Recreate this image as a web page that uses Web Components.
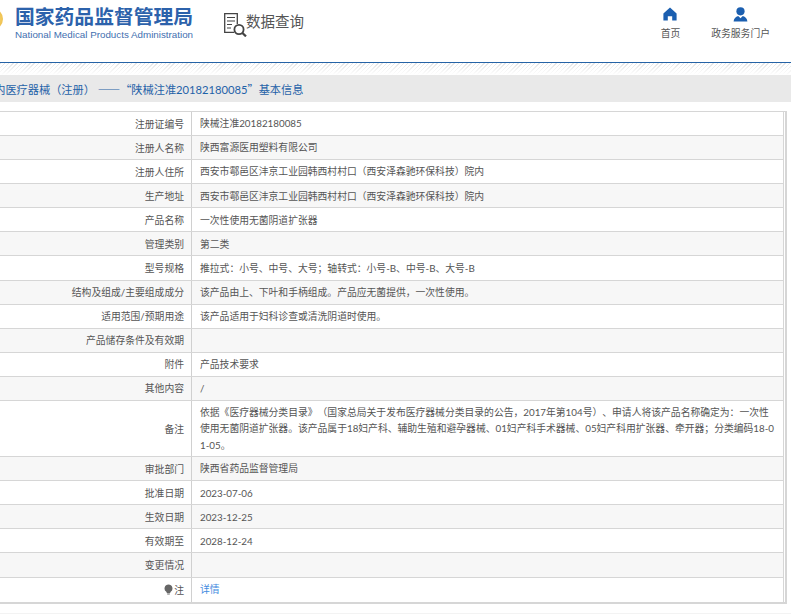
<!DOCTYPE html>
<html lang="zh-CN">
<head>
<meta charset="UTF-8">
<title>数据查询</title>
<style>
  html, body {
    margin: 0;
    height: 614px;
    overflow: hidden;
    background: #fff;
    font-family: Lato, "Noto Sans CJK SC", sans-serif;
    font-size: 9.8px;
    color: #555;
    text-spacing-trim: space-all;
  }
  .cjk { font-family: "Noto Sans CJK SC", sans-serif; }
</style>
</head>
<body>
<site-header>
  <nav-item slot="nav" label="首页" icon="home"></nav-item>
  <nav-item slot="nav" label="政务服务门户" icon="user"></nav-item>
</site-header>
<title-bar>境内医疗器械（注册） <span class="cjk">——“</span>陕械注准20182180085<span class="cjk">”</span>基本信息</title-bar>
<info-table>
  <info-row label="注册证编号">陕械注准20182180085</info-row>
  <info-row label="注册人名称">陕西富源医用塑料有限公司</info-row>
  <info-row label="注册人住所">西安市鄠邑区沣京工业园韩西村村口（西安泽森驰环保科技）院内</info-row>
  <info-row label="生产地址">西安市鄠邑区沣京工业园韩西村村口（西安泽森驰环保科技）院内</info-row>
  <info-row label="产品名称">一次性使用无菌阴道扩张器</info-row>
  <info-row label="管理类别">第二类</info-row>
  <info-row label="型号规格">推拉式：小号、中号、大号；轴转式：小号-B、中号-B、大号-B</info-row>
  <info-row label="结构及组成/主要组成成分">该产品由上、下叶和手柄组成。产品应无菌提供，一次性使用。</info-row>
  <info-row label="适用范围/预期用途">该产品适用于妇科诊查或清洗阴道时使用。</info-row>
  <info-row label="产品储存条件及有效期"></info-row>
  <info-row label="附件">产品技术要求</info-row>
  <info-row label="其他内容">/</info-row>
  <info-row label="备注">依据《医疗器械分类目录》（国家总局关于发布医疗器械分类目录的公告，2017年第104号）、申请人将该产品名称确定为：一次性使用无菌阴道扩张器。该产品属于18妇产科、辅助生殖和避孕器械、01妇产科手术器械、05妇产科用扩张器、牵开器；分类编码18-01-05。</info-row>
  <info-row label="审批部门">陕西省药品监督管理局</info-row>
  <info-row label="批准日期">2023-07-06</info-row>
  <info-row label="生效日期">2023-12-25</info-row>
  <info-row label="有效期至">2028-12-24</info-row>
  <info-row label="变更情况"></info-row>
  <info-row label="注" note><a>详情</a></info-row>
</info-table>
<page-foot></page-foot>

<script>
  const ICONS = {
    home: '<svg width="14" height="14" viewBox="0 0 14 14"><path fill="#1b5fb0" d="M7 .5 13.6 6.4V13.5H9.2V9.2H4.8V13.5H.4V6.4Z"/></svg>',
    user: '<svg width="15" height="15" viewBox="0 0 15 15"><circle cx="7.5" cy="4.3" r="4.1" fill="#1b5fb0"/><path fill="#1b5fb0" d="M.6 14.6C.8 11.4 2.6 9.6 5.2 8.9L7.5 11.2 9.8 8.9C12.4 9.6 14.2 11.4 14.4 14.6Z"/></svg>'
  };

  class SiteHeader extends HTMLElement {
    constructor() {
      super();
      this.attachShadow({ mode: 'open' }).innerHTML = `
        <style>
          :host { display: flex; height: 62px; border-bottom: 1px solid #2563a6; box-sizing: content-box; }
          .emblem { width: 22px; height: 22px; margin: 8px 12px 0 -19px; border-radius: 50%; flex: none;
            background: radial-gradient(circle at 70% 50%, #f7d46a, #e2a52e); }
          .brand { width: 190px; flex: none; }
          .cn { font: bold 19.8px/22px "Noto Sans CJK SC", sans-serif; color: #2c62ab; margin-top: 5px; white-space: nowrap; }
          .en { font: 9.8px/12px "Liberation Sans", sans-serif; color: #3f6fb0; margin-top: 2px; white-space: nowrap; }
          .query { display: flex; align-items: flex-start; margin: 13px 0 0 19px; }
          .query span { font: 14.5px/18px "Noto Sans CJK SC", sans-serif; color: #555; margin: -1px 0 0 -1px; }
          nav { display: flex; gap: 31px; margin: 7px 21px 0 auto; }
        </style>
        <div class="emblem"></div>
        <div class="brand">
          <div class="cn">国家药品监督管理局</div>
          <div class="en">National Medical Products Administration</div>
        </div>
        <div class="query">
          <svg width="23" height="24" viewBox="0 0 23 24" fill="none" stroke="#444">
            <path stroke-width="1.3" d="M10 19.4H.7V.7H13.3V11"/>
            <path stroke-width="1.2" d="M3 4.5H11M3 8H11M3 11.5H8M3 15H7"/>
            <circle cx="15" cy="16.5" r="4.6" stroke-width="1.8"/>
            <path stroke-width="2.2" d="M18.4 20 22 23.4"/>
          </svg>
          <span>数据查询</span>
        </div>
        <nav><slot name="nav"></slot></nav>`;
    }
  }

  class NavItem extends HTMLElement {
    constructor() {
      super();
      this.attachShadow({ mode: 'open' }).innerHTML = `
        <style>
          :host { display: flex; flex-direction: column; align-items: center; color: #555; }
          .icon { height: 14px; display: flex; }
          .text { margin-top: 4px; line-height: 16px; white-space: nowrap; }
        </style>
        <div class="icon">${ICONS[this.getAttribute('icon')]}</div>
        <div class="text">${this.getAttribute('label')}</div>`;
    }
  }

  class TitleBar extends HTMLElement {
    constructor() {
      super();
      this.attachShadow({ mode: 'open' }).innerHTML = `
        <style>
          :host { display: block; height: 39px; overflow: hidden;
            background:
              linear-gradient(to bottom, rgba(255,255,255,.25), #fff 12px) 0 0 / 100% 12px no-repeat,
              repeating-linear-gradient(135deg, #dcdcdc 0 1px, #fff 1px 3px) 0 0 / 100% 12px no-repeat; }
          .bar { margin-top: 12px; height: 27px; background: #e9e9e9; display: flex; align-items: center;
            font-size: 11.2px; color: #1f62a8; white-space: nowrap; }
          .bar span { margin-left: -17px; }
        </style>
        <div class="bar"><span><slot></slot></span></div>`;
    }
  }

  class InfoTable extends HTMLElement {
    constructor() {
      super();
      this.attachShadow({ mode: 'open' }).innerHTML = `
        <style>
          :host { display: block; width: 844px; margin: 9px 0 0 -60px; padding-right: 1px;
            border-top: 1px solid #d6d6d6; border-right: 2px solid #d6d6d6; border-bottom: 2px solid #d6d6d6; }
        </style>
        <slot></slot>`;
    }
  }

  class InfoRow extends HTMLElement {
    constructor() {
      super();
      const note = this.hasAttribute('note')
        ? '<svg width="9" height="11" viewBox="0 0 9 11"><path fill="#666" d="M4.5.5a4 4 0 0 1 2.2 7.3L6 9.2H3L2.3 7.8A4 4 0 0 1 4.5.5ZM3.2 9.8H5.8V10.6H3.2Z"/></svg>'
        : '';
      this.attachShadow({ mode: 'open' }).innerHTML = `
        <style>
          :host { display: flex; min-height: 24.08px; box-sizing: border-box; border-bottom: 1px solid #d6d6d6; border-right: 1px solid #d6d6d6; }
          :host(:nth-child(even)) { background: #f7f7f7; }
          :host(:last-child) { border-bottom: 0; }
          .label { width: 252px; flex: none; box-sizing: border-box; border-right: 1px solid #d0d0d0; padding-right: 7px;
            display: flex; align-items: center; justify-content: flex-end; gap: 1px; white-space: nowrap; }
          .value { flex: 1; padding: 3px 5px 3px 8px; line-height: 16.4px; align-self: center; word-break: break-all; }
          ::slotted(a) { color: #3f8be0; }
        </style>
        <div class="label">${note}${this.getAttribute('label')}</div>
        <div class="value"><slot></slot></div>`;
    }
  }

  class PageFoot extends HTMLElement {
    constructor() {
      super();
      this.attachShadow({ mode: 'open' }).innerHTML = `
        <style>:host { display: block; height: 10px; margin-top: 9px; background: #f3f3f3; }</style>`;
    }
  }

  customElements.define('site-header', SiteHeader);
  customElements.define('nav-item', NavItem);
  customElements.define('title-bar', TitleBar);
  customElements.define('info-table', InfoTable);
  customElements.define('info-row', InfoRow);
  customElements.define('page-foot', PageFoot);
</script>
</body>
</html>
